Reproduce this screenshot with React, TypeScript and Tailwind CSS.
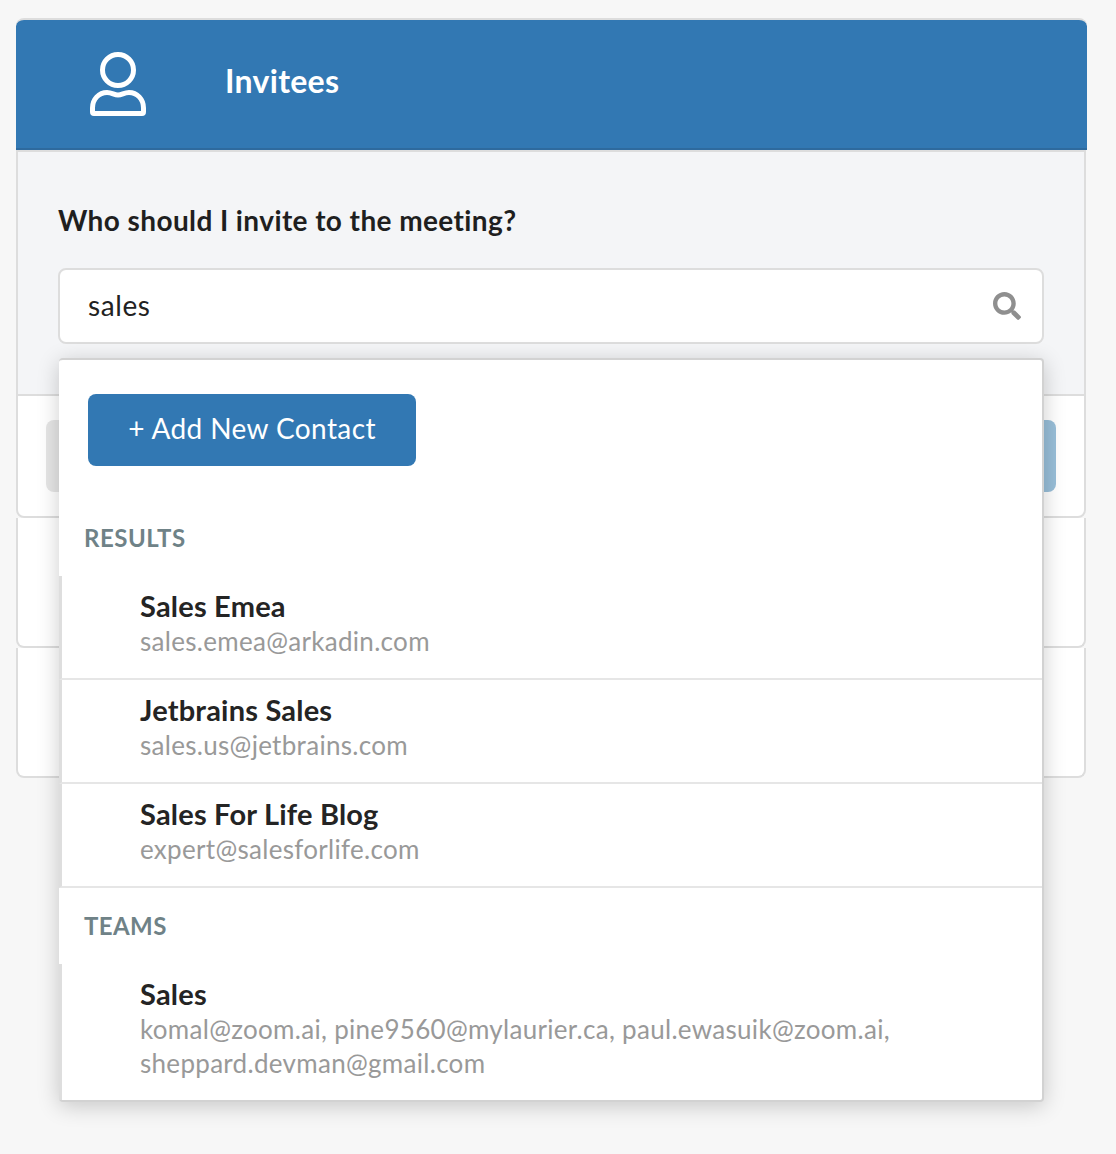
import React from "react";
import { FaSearch } from "react-icons/fa";

const font = { fontFamily: "Lato, 'Open Sans', sans-serif" };

const UserIcon = () => (
  <svg width="56" height="64" viewBox="0 0 56 64" fill="none" stroke="white" strokeWidth="5">
    <circle cx="28" cy="18" r="15.5" />
    <path
      d="M4 61.5 C3 61.5 2.5 61 2.5 60 V56 C2.5 47 9 40.5 17 40.5 C22 40.5 24 43 28 43 C32 43 34 40.5 39 40.5 C47 40.5 53.5 47 53.5 56 V60 C53.5 61 53 61.5 52 61.5 Z"
      strokeLinejoin="round"
    />
  </svg>
);

interface ContactProps {
  name: string;
  detail: React.ReactNode;
  last?: boolean;
}

const Contact: React.FC<ContactProps> = ({ name, detail, last }) => (
  <div className={`border-l-[3px] border-l-[#dedede] pl-[78px] pt-[12px] ${last ? "pb-[20px]" : "h-[104px] border-b-2 border-b-[#e6e6e6]"}`}>
    <div className="text-[29px] leading-[36px] font-bold tracking-[0.2px] text-[#242424]">{name}</div>
    <div className="text-[26px] leading-[34px] tracking-[0.3px] text-[#999999]">{detail}</div>
  </div>
);

export default function App() {
  return (
    <div className="min-h-[1154px] bg-[#f7f7f7] pl-[16px] pt-[18px]" style={font}>
      <div className="relative w-[1071px]">
        {/* Header */}
        <div className="flex h-[132px] items-center rounded-t-lg border-t-2 border-b-2 border-t-[#dddddd] border-b-[#2e6a9e] bg-[#3278b3]">
          <div className="ml-[74px] w-[135px]">
            <UserIcon />
          </div>
          <div className="mt-[-6px] text-[32px] font-bold tracking-[0.3px] text-white">Invitees</div>
        </div>

        <div className="w-[1070px]">
          {/* Search section */}
          <div className="h-[244px] border-x-2 border-t-2 border-[#dddddd] bg-[#f4f5f7] px-[40px] pt-[50px]">
            <div className="text-[28px] leading-9 font-bold tracking-[0.4px] text-[#1f1f1f]">Who should I invite to the meeting?</div>
            <div className="mt-[30px] flex h-[76px] items-center justify-between rounded-lg border-2 border-[#dddddd] bg-white pl-[28px] pr-[21px]">
              <span className="pb-[2px] text-[28px] tracking-[0.6px] text-[#222222]">sales</span>
              <FaSearch className="text-[28px] text-[#8f8f8f]" />
            </div>
          </div>

          {/* Rows behind the dropdown */}
          <div className="flex h-[124px] items-center justify-between rounded-b-lg border-2 border-[#dddddd] bg-white px-[28px]">
            <div className="h-[72px] w-[60px] rounded-lg bg-[#e6e6e6]" />
            <div className="h-[72px] w-[60px] rounded-lg bg-[#99bfd9]" />
          </div>
          <div className="h-[130px] rounded-b-lg border-x-2 border-b-2 border-[#dddddd] bg-white" />
          <div className="h-[130px] rounded-b-lg border-x-2 border-b-2 border-[#dddddd] bg-white" />
        </div>

        {/* Dropdown */}
        <div className="absolute left-[43px] top-[340px] w-[985px] rounded-sm border-y-2 border-r-2 border-[#d2d2d2] bg-white shadow-[0_4px_22px_rgba(0,0,0,0.2)]">
          <div className="pl-[29px] pt-[34px]">
            <button className="h-[72px] w-[328px] rounded-lg bg-[#3278b3] pb-[4px] text-[28px] tracking-[0.4px] text-white">+ Add New Contact</button>
          </div>
          <div className="pl-[25px] pt-[55px] pb-[21px] text-[24px] leading-[34px] font-bold tracking-[0.5px] text-[#6f8287]">RESULTS</div>
          <Contact name="Sales Emea" detail="sales.emea@arkadin.com" />
          <Contact name="Jetbrains Sales" detail="sales.us@jetbrains.com" />
          <Contact name="Sales For Life Blog" detail="expert@salesforlife.com" />
          <div className="pl-[25px] pt-[21px] pb-[21px] text-[24px] leading-[34px] font-bold tracking-[0.4px] text-[#6f8287]">TEAMS</div>
          <Contact
            last
            name="Sales"
            detail={
              <>
                komal@zoom.ai, pine9560@mylaurier.ca, paul.ewasuik@zoom.ai,
                <br />
                sheppard.devman@gmail.com
              </>
            }
          />
        </div>
      </div>
    </div>
  );
}
